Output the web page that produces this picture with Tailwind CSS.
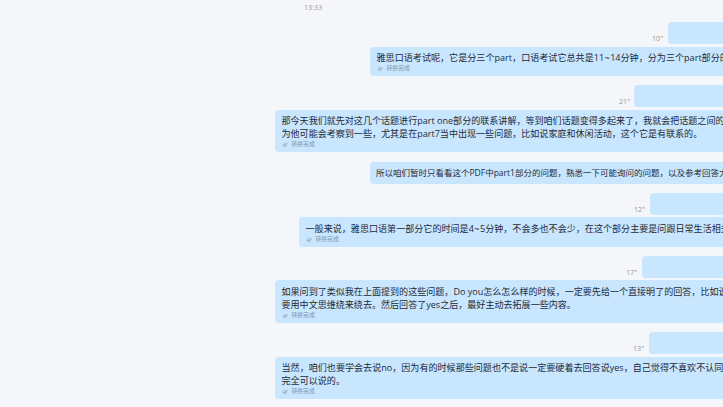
<!DOCTYPE html>
<html lang="zh-CN">
<head>
  <meta charset="UTF-8">
  <meta name="viewport" content="width=device-width, initial-scale=1.0">
  <script src="https://cdn.jsdelivr.net/npm/@tailwindcss/browser@4"></script>
  <title>聊天记录</title>
</head>
<body class="w-[723px] h-[407px] overflow-hidden bg-[#f5f6fa] font-['Open_Sans','Noto_Sans_CJK_SC',sans-serif] text-[#1d2a38]">
  <svg class="hidden">
    <symbol id="check" viewBox="0 0 6 6">
      <circle cx="3" cy="3" r="2.5" fill="#b9d5ea" />
      <path d="M1.2 2.8l1.3 1.4L5.2 1.2" fill="none" stroke="#7d98b0" stroke-width=".8" />
    </symbol>
  </svg>

  <main class="flex flex-col h-[407px] overflow-hidden whitespace-nowrap">
    <div class="h-[22px] shrink-0 pl-[304px] pt-[2px] text-[7.2px] leading-[10px] text-[#94979c]">13:33</div>

    <div class="flex items-end h-[22px] shrink-0 pl-[652px]">
      <span class="w-4 text-[7.2px] leading-[11px] text-[#94979c]">10"</span>
      <div class="flex-1 h-full rounded-l bg-[#c9e6ff]"></div>
    </div>
    <div class="mt-[3px] ml-[370px] h-[29px] shrink-0 overflow-hidden rounded-l bg-[#c9e6ff] pl-[6.5px] pt-[4px]">
      <p class="text-[9.08px] leading-[13px]">雅思口语考试呢，它是分三个part，口语考试它总共是11<span class="px-[.4px]">~</span>14分钟，分为三个part部分的</p>
      <div class="flex items-center gap-[4px] h-[9px] text-[5.8px] leading-[9px] text-[#7f98ad]">
        <svg class="size-[6px]"><use href="#check" /></svg>转换完成
      </div>
    </div>

    <div class="mt-[9px] flex items-end h-[22px] shrink-0 pl-[619px]">
      <span class="w-[15px] text-[7.2px] leading-[11px] text-[#94979c]">21"</span>
      <div class="flex-1 h-full rounded-l bg-[#c9e6ff]"></div>
    </div>
    <div class="mt-[3px] ml-[275px] h-[42px] shrink-0 overflow-hidden rounded-l bg-[#c9e6ff] pl-[6.5px] pt-[4px]">
      <p class="text-[9.06px] leading-[13px]">那今天我们就先对这几个话题进行part one部分的联系讲解，等到咱们话题变得多起来了，我就会把话题之间的<br>为他可能会考察到一些，尤其是在part7当中出现一些问题，比如说家庭和休闲活动，这个它是有联系的。</p>
      <div class="flex items-center gap-[4px] h-[9px] text-[5.8px] leading-[9px] text-[#7f98ad]">
        <svg class="size-[6px]"><use href="#check" /></svg>转换完成
      </div>
    </div>

    <div class="mt-[10px] ml-[370px] h-[22px] shrink-0 overflow-hidden rounded-l bg-[#c9e6ff] pl-[6px] pt-[4px]">
      <p class="text-[8.5px] leading-[13px]">所以咱们暂时只看看这个PDF中part1部分的问题，熟悉一下可能询问的问题，以及参考回答大</p>
    </div>

    <div class="mt-[9px] flex items-end h-[22px] shrink-0 pl-[634px]">
      <span class="w-4 text-[7.2px] leading-[11px] text-[#94979c]">12"</span>
      <div class="flex-1 h-full rounded-l bg-[#c9e6ff]"></div>
    </div>
    <div class="mt-[2px] ml-[299px] h-[30px] shrink-0 overflow-hidden rounded-l bg-[#c9e6ff] pl-[6.5px] pt-[5px]">
      <p class="text-[9.07px] leading-[13px]">一般来说，雅思口语第一部分它的时间是4<span class="px-[.5px]">~</span>5分钟，不会多也不会少，在这个部分主要是问跟日常生活相关</p>
      <div class="flex items-center gap-[4px] h-[9px] text-[5.8px] leading-[9px] text-[#7f98ad]">
        <svg class="size-[6px]"><use href="#check" /></svg>转换完成
      </div>
    </div>

    <div class="mt-[9px] flex items-end h-[22px] shrink-0 pl-[626px]">
      <span class="w-4 text-[7.2px] leading-[11px] text-[#94979c]">17"</span>
      <div class="flex-1 h-full rounded-l bg-[#c9e6ff]"></div>
    </div>
    <div class="mt-[2px] ml-[275px] h-[43px] shrink-0 overflow-hidden rounded-l bg-[#c9e6ff] pl-[6.5px] pt-[5px]">
      <p class="text-[9.06px] leading-[13px]">如果问到了类似我在上面提到的这些问题，Do you怎么怎么样的时候，一定要先给一个直接明了的回答，比如说<br>要用中文思维绕来绕去。然后回答了yes之后，最好主动去拓展一些内容。</p>
      <div class="flex items-center gap-[4px] h-[9px] text-[5.8px] leading-[9px] text-[#7f98ad]">
        <svg class="size-[6px]"><use href="#check" /></svg>转换完成
      </div>
    </div>

    <div class="mt-[9px] flex items-end h-[22px] shrink-0 pl-[633px]">
      <span class="w-4 text-[7.2px] leading-[11px] text-[#94979c]">13"</span>
      <div class="flex-1 h-full rounded-l bg-[#c9e6ff]"></div>
    </div>
    <div class="mt-[3px] ml-[275px] h-[42px] shrink-0 overflow-hidden rounded-l bg-[#c9e6ff] pl-[6.5px] pt-[4px]">
      <p class="text-[9.07px] leading-[13px]">当然，咱们也要学会去说no，因为有的时候那些问题也不是说一定要硬着去回答说yes，自己觉得不喜欢不认同<br>完全可以说的。</p>
      <div class="flex items-center gap-[4px] h-[9px] text-[5.8px] leading-[9px] text-[#7f98ad]">
        <svg class="size-[6px]"><use href="#check" /></svg>转换完成
      </div>
    </div>
  </main>
</body>
</html>
